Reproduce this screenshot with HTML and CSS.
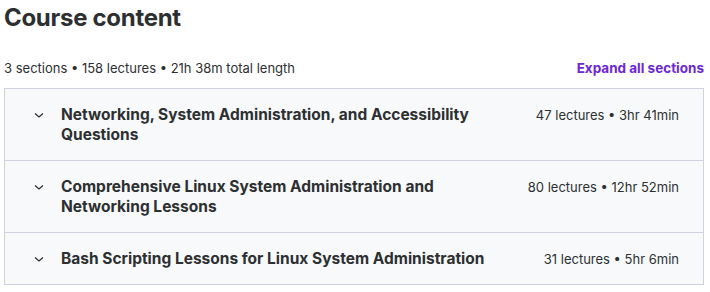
FILE: index.html
```html
<!DOCTYPE html>
<html>
<head>
<meta charset="utf-8">
<link rel="stylesheet" href="styles.css">
</head>
<body>
<div class="page">
  <h2 class="title">Course content</h2>
  <div class="meta">
    <span class="stats">3 sections • 158 lectures • 21h 38m total length</span>
    <button class="expand">Expand all sections</button>
  </div>
  <div class="sections">
    <div class="section">
      <svg class="chev" width="12" height="12" viewBox="0 0 12 12"><path d="M2 4.5 L6 8 L10 4.5" fill="none" stroke="#2d2f31" stroke-width="1.2"/></svg>
      <span class="sec-title">Networking, System Administration, and Accessibility Questions</span>
      <span class="sec-info">47 lectures • 3hr 41min</span>
    </div>
    <div class="section">
      <svg class="chev" width="12" height="12" viewBox="0 0 12 12"><path d="M2 4.5 L6 8 L10 4.5" fill="none" stroke="#2d2f31" stroke-width="1.2"/></svg>
      <span class="sec-title">Comprehensive Linux System Administration and Networking Lessons</span>
      <span class="sec-info">80 lectures • 12hr 52min</span>
    </div>
    <div class="section">
      <svg class="chev" width="12" height="12" viewBox="0 0 12 12"><path d="M2 4.5 L6 8 L10 4.5" fill="none" stroke="#2d2f31" stroke-width="1.2"/></svg>
      <span class="sec-title">Bash Scripting Lessons for Linux System Administration</span>
      <span class="sec-info">31 lectures • 5hr 6min</span>
    </div>
  </div>
</div>
</body>
</html>
```
FILE: styles.css
```css
html, body { margin: 0; background: #fff; }
body { font-family: "Inter", "Noto Sans", sans-serif; color: #2d2f31; }
.page { padding: 0 6px 0 4px; }
.title { margin: 0; padding-top: 2px; font-size: 24px; line-height: 32px; font-weight: 700; letter-spacing: -0.3px; }
.meta { display: flex; justify-content: space-between; align-items: center; margin-top: 24px; height: 20px; margin-bottom: 10px; }
.stats { font-size: 13px; }
.expand { border: 0; background: none; padding: 0; font-family: inherit; font-size: 13.5px; font-weight: 700; color: #6d28d2; }
.sections { border: 1px solid #d1d2e0; }
.section { display: flex; align-items: flex-start; background: #f7f9fa; padding: 16px 24px 15px 28px; border-top: 1px solid #d1d2e0; }
.section:first-child { border-top: 0; }
.chev { flex: none; margin-top: 4px; margin-right: 16px; }
.sec-title { flex: 1; font-size: 15.5px; font-weight: 700; line-height: 20px; padding-right: 30px; }
.sec-info { flex: none; font-size: 13px; line-height: 20px; }
```
